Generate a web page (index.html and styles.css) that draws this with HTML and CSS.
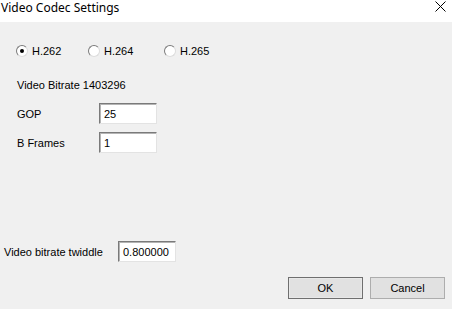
FILE: index.html
```html
<!DOCTYPE html>
<html>
<head>
<meta charset="utf-8">
<link rel="stylesheet" href="styles.css">
</head>
<body>
<div class="window">
  <div class="titlebar">
    <span class="title">Video Codec Settings</span>
    <svg class="close" width="11" height="11" viewBox="0 0 11 11"><path d="M0.5 0.5 L10.5 10.5 M10.5 0.5 L0.5 10.5" stroke="#000" stroke-width="1" fill="none"/></svg>
  </div>
  <div class="content">
    <div class="radios">
      <label class="radio-item r1"><span class="radio checked"></span><span>H.262</span></label>
      <label class="radio-item r2"><span class="radio"></span><span>H.264</span></label>
      <label class="radio-item r3"><span class="radio"></span><span>H.265</span></label>
    </div>
    <div class="bitrate">Video Bitrate 1403296</div>
    <div class="field-row gop">
      <span class="label">GOP</span>
      <div class="input">25</div>
    </div>
    <div class="field-row bframes">
      <span class="label">B Frames</span>
      <div class="input">1</div>
    </div>
    <div class="twiddle-row">
      <span class="label">Video bitrate twiddle</span>
      <div class="input">0.800000</div>
    </div>
    <div class="buttons">
      <div class="btn default">OK</div>
      <div class="btn">Cancel</div>
    </div>
  </div>
</div>
</body>
</html>
```
FILE: styles.css
```css
html, body {
  margin: 0;
  padding: 0;
}
body {
  width: 452px;
  height: 309px;
  overflow: hidden;
  font-family: "Liberation Sans", Arial, sans-serif;
  font-size: 11px;
  color: #000;
}
.window {
  width: 452px;
  height: 309px;
  display: flex;
  flex-direction: column;
}
.titlebar {
  height: 22px;
  background: #fff;
  display: flex;
  align-items: flex-start;
  justify-content: space-between;
}
.title {
  font-family: "Noto Sans", "Open Sans", sans-serif;
  font-size: 12px;
  line-height: 16px;
  padding-left: 1px;
  padding-top: 0;
}
.close {
  margin-top: 1px;
  margin-right: 6px;
}
.content {
  flex: 1;
  background: #f0f0f0;
  display: flex;
  flex-direction: column;
}
.radios {
  display: flex;
  align-items: center;
  height: 14px;
  margin-top: 22px;
  padding-left: 16px;
}
.radio-item {
  display: flex;
  align-items: center;
  gap: 4px;
}
.r1 { width: 72px; }
.r2 { width: 76px; }
.radio {
  width: 10px;
  height: 10px;
  border-radius: 50%;
  background: #fff;
  border: 1px solid;
  border-color: #7a7a7a #dcdcdc #dcdcdc #7a7a7a;
  position: relative;
  box-sizing: content-box;
}
.radio.checked::after {
  content: "";
  position: absolute;
  left: 3px;
  top: 3px;
  width: 4px;
  height: 4px;
  border-radius: 50%;
  background: #000;
}
.bitrate {
  margin-top: 20px;
  padding-left: 17px;
  line-height: 14px;
}
.field-row {
  display: grid;
  grid-template-columns: 82px 58px;
  align-items: center;
  padding-left: 17px;
}
.gop { margin-top: 11px; }
.bframes { margin-top: 8px; }
.input {
  box-sizing: border-box;
  height: 21px;
  background: #fff;
  border: 1px solid;
  border-color: #7a7a7a #e3e3e3 #e3e3e3 #7a7a7a;
  box-shadow: inset 1px 1px 0 #b4b4b4;
  padding: 3px 0 0 4px;
  line-height: 14px;
}
.twiddle-row {
  display: grid;
  grid-template-columns: 114px 58px;
  align-items: center;
  padding-left: 4px;
  margin-top: 88px;
}
.buttons {
  display: flex;
  justify-content: flex-end;
  gap: 7px;
  padding-right: 7px;
  margin-top: 15px;
}
.btn {
  box-sizing: border-box;
  width: 75px;
  height: 22px;
  background: #e1e1e1;
  border: 1px solid #adadad;
  display: flex;
  align-items: center;
  justify-content: center;
}
.btn.default {
  border-color: #6f6f6f;
  box-shadow: inset 0 0 0 1px #e8e8e8;
}
```
